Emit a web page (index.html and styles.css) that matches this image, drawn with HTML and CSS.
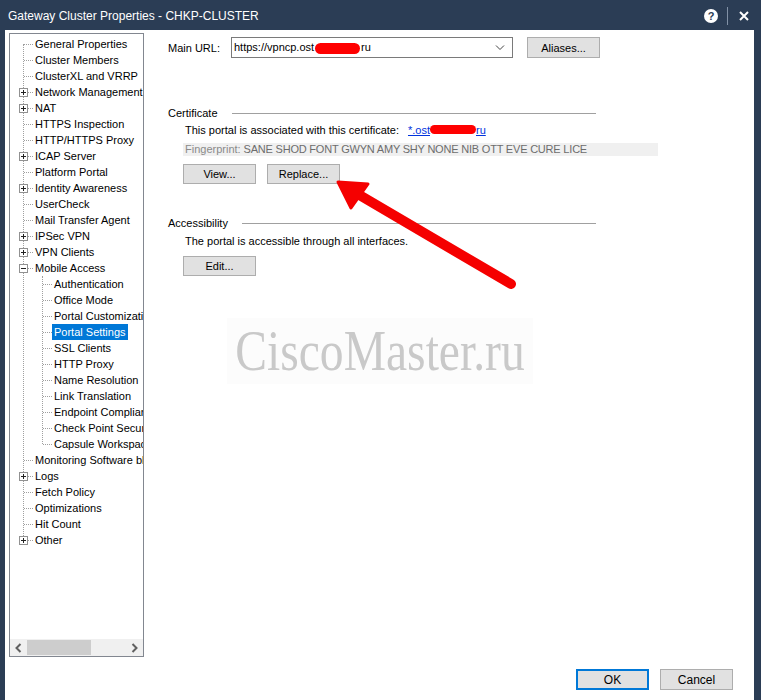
FILE: index.html
```html
<!DOCTYPE html>
<html lang="en">
<head>
    <meta charset="UTF-8">
    <meta name="viewport" content="width=device-width, initial-scale=1.0">
    <title>Gateway Cluster Properties - CHKP-CLUSTER</title>
    <link rel="stylesheet" href="styles.css">
</head>
<body>
    <div class="window">
        <div class="titlebar">
            <span class="title">Gateway Cluster Properties - CHKP-CLUSTER</span>
            <div class="tb-controls">
                <span class="help">?</span>
                <span class="tb-sep"></span>
                <svg class="tb-close" width="10" height="10" viewBox="0 0 10 10">
                    <path d="M1 1L9 9M9 1L1 9" stroke="#fff" stroke-width="2" />
                </svg>
            </div>
        </div>

        <div class="client">
            <div class="main-row">
                <div class="tree">
                    <div class="tree-scroll">
                        <ul class="tree-root">
                            <li><div class="row"><span class="label">General Properties</span></div></li>
                            <li><div class="row"><span class="label">Cluster Members</span></div></li>
                            <li><div class="row"><span class="label">ClusterXL and VRRP</span></div></li>
                            <li><div class="row"><span class="exp plus"></span><span class="label">Network Management</span></div></li>
                            <li><div class="row"><span class="exp plus"></span><span class="label">NAT</span></div></li>
                            <li><div class="row"><span class="label">HTTPS Inspection</span></div></li>
                            <li><div class="row"><span class="label">HTTP/HTTPS Proxy</span></div></li>
                            <li><div class="row"><span class="exp plus"></span><span class="label">ICAP Server</span></div></li>
                            <li><div class="row"><span class="label">Platform Portal</span></div></li>
                            <li><div class="row"><span class="exp plus"></span><span class="label">Identity Awareness</span></div></li>
                            <li><div class="row"><span class="label">UserCheck</span></div></li>
                            <li><div class="row"><span class="label">Mail Transfer Agent</span></div></li>
                            <li><div class="row"><span class="exp plus"></span><span class="label">IPSec VPN</span></div></li>
                            <li><div class="row"><span class="exp plus"></span><span class="label">VPN Clients</span></div></li>
                            <li>
                                <div class="row"><span class="exp"></span><span class="label">Mobile Access</span></div>
                                <ul class="tree-kids">
                                    <li><div class="row"><span class="label">Authentication</span></div></li>
                                    <li><div class="row"><span class="label">Office Mode</span></div></li>
                                    <li><div class="row"><span class="label">Portal Customization</span></div></li>
                                    <li><div class="row"><span class="label selected">Portal Settings</span></div></li>
                                    <li><div class="row"><span class="label">SSL Clients</span></div></li>
                                    <li><div class="row"><span class="label">HTTP Proxy</span></div></li>
                                    <li><div class="row"><span class="label">Name Resolution</span></div></li>
                                    <li><div class="row"><span class="label">Link Translation</span></div></li>
                                    <li><div class="row"><span class="label">Endpoint Compliance</span></div></li>
                                    <li><div class="row"><span class="label">Check Point Secure Workspace</span></div></li>
                                    <li><div class="row"><span class="label">Capsule Workspace</span></div></li>
                                </ul>
                            </li>
                            <li><div class="row"><span class="label">Monitoring Software blades</span></div></li>
                            <li><div class="row"><span class="exp plus"></span><span class="label">Logs</span></div></li>
                            <li><div class="row"><span class="label">Fetch Policy</span></div></li>
                            <li><div class="row"><span class="label">Optimizations</span></div></li>
                            <li><div class="row"><span class="label">Hit Count</span></div></li>
                            <li><div class="row"><span class="exp plus"></span><span class="label">Other</span></div></li>
                        </ul>
                    </div>
                    <div class="hscroll">
                        <svg class="hs-arrow" width="8" height="10" viewBox="0 0 8 10"><path d="M6 1L2 5L6 9" fill="none" stroke="#606060" stroke-width="2" /></svg>
                        <div class="hs-track"><div class="hs-thumb"></div></div>
                        <svg class="hs-arrow" width="8" height="10" viewBox="0 0 8 10"><path d="M2 1L6 5L2 9" fill="none" stroke="#606060" stroke-width="2" /></svg>
                    </div>
                </div>

                <div class="page">
                    <div class="url-row">
                        <span class="url-label">Main URL:</span>
                        <div class="combo">
                            <span class="combo-text">https://vpncp.ost<span class="blot url-blot"></span>ru</span>
                            <svg class="combo-chev" width="10" height="6" viewBox="0 0 10 6"><path d="M1 0.5L5 4.5L9 0.5" fill="none" stroke="#444" stroke-width="1" /></svg>
                        </div>
                        <button class="btn aliases">Aliases...</button>
                    </div>

                    <div class="group cert-group">
                        <div class="group-head"><span>Certificate</span><span class="group-line"></span></div>
                        <div class="group-body">
                            <div class="text-row">This portal is associated with this certificate:<a class="cert-link" href="#">*.ost<span class="blot link-blot"></span>ru</a></div>
                            <div class="fingerprint"><span class="fp-key">Fingerprint:</span> SANE SHOD FONT GWYN AMY SHY NONE NIB OTT EVE CURE LICE</div>
                            <div class="btn-row">
                                <button class="btn">View...</button>
                                <button class="btn">Replace...</button>
                            </div>
                        </div>
                    </div>

                    <div class="group access-group">
                        <div class="group-head"><span>Accessibility</span><span class="group-line"></span></div>
                        <div class="group-body">
                            <div class="text-row">The portal is accessible through all interfaces.</div>
                            <div class="btn-row">
                                <button class="btn">Edit...</button>
                            </div>
                        </div>
                    </div>
                </div>
            </div>

            <div class="footer">
                <button class="btn big default">OK</button>
                <button class="btn big">Cancel</button>
            </div>
        </div>

        <div class="watermark">CiscoMaster.ru</div>

        <svg class="arrow" width="761" height="700" viewBox="0 0 761 700">
            <line x1="511" y1="284" x2="356" y2="193" stroke="#f50000" stroke-width="10" stroke-linecap="round" />
            <polygon points="338,182 368,184 351,208" fill="#f50000" stroke="#f50000" stroke-width="3" stroke-linejoin="round" />
        </svg>
    </div>
</body>
</html>
```

FILE: styles.css
```css
body {
  margin: 0;
  font-family: "Liberation Sans", Arial, sans-serif;
  font-size: 11px;
  color: #000;
  background: #fff;
}

.window {
  position: relative;
  width: 761px;
  height: 700px;
  background: #2b3d55;
  display: flex;
  flex-direction: column;
  overflow: hidden;
}

/* title bar */
.titlebar {
  height: 30px;
  flex: none;
  display: flex;
  align-items: center;
  justify-content: space-between;
  padding: 1px 0 0 8px;
  box-sizing: border-box;
}

.title {
  color: #fff;
  font-size: 12px;
}

.tb-controls {
  display: flex;
  align-items: center;
  padding-right: 12px;
}

.help {
  width: 14px;
  height: 14px;
  border-radius: 50%;
  background: #fff;
  color: #2b3d55;
  font-weight: bold;
  font-size: 11px;
  line-height: 14px;
  text-align: center;
}

.tb-sep {
  width: 1px;
  height: 18px;
  background: #8191a6;
  margin: 0 11px 0 9px;
}

.tb-close {
  display: block;
}

/* client area */
.client {
  flex: 1;
  background: #fff;
  margin: 0 7px 0 5px;
  display: flex;
  flex-direction: column;
}

.main-row {
  display: flex;
}

/* tree */
.tree {
  width: 135px;
  height: 624px;
  margin: 3px 0 0 4px;
  box-sizing: border-box;
  border: 1px solid #828790;
  display: flex;
  flex-direction: column;
  flex: none;
}

.tree-scroll {
  flex: 1;
  overflow: hidden;
  padding-top: 2px;
}

.tree ul {
  list-style: none;
  margin: 0;
  padding: 0;
  position: relative;
}

.tree-root::before,
.tree-kids::before {
  content: "";
  position: absolute;
  border-left: 1px dotted #a0a0a0;
}

.tree-root::before { left: 13px; top: 8px; bottom: 8px; }
.tree-kids::before { left: 32px; top: 0; bottom: 8px; }

.row {
  position: relative;
  height: 16px;
  line-height: 16px;
  padding-left: 23px;
  white-space: nowrap;
}

.row::before {
  content: "";
  position: absolute;
  left: 14px;
  top: 8px;
  width: 9px;
  border-top: 1px dotted #a0a0a0;
}

.tree-kids .row { padding-left: 42px; }
.tree-kids .row::before { left: 33px; }

.label {
  display: inline-block;
  padding: 0 2px;
  height: 16px;
}

.label.selected {
  background: #0078d7;
  color: #fff;
}

.exp {
  position: absolute;
  left: 9px;
  top: 4px;
  width: 9px;
  height: 9px;
  box-sizing: border-box;
  border: 1px solid #919191;
  background: #fff;
  z-index: 1;
}

.exp::before,
.exp::after {
  content: "";
  position: absolute;
  background: #222;
}

.exp::before { left: 1px; top: 3px; width: 5px; height: 1px; }
.exp.plus::after { left: 3px; top: 1px; width: 1px; height: 5px; }

.hscroll {
  height: 17px;
  background: #f0f0f0;
  display: flex;
  align-items: center;
  flex: none;
}

.hs-arrow {
  width: 17px;
  flex: none;
}

.hs-track {
  flex: 1;
  height: 15px;
}

.hs-thumb {
  width: 64px;
  height: 15px;
  background: #cdcdcd;
}

/* right page */
.page {
  padding: 7px 0 0 24px;
  flex: 1;
}

.url-row {
  display: flex;
  align-items: center;
  height: 21px;
}

.url-label {
  width: 63px;
}

.combo {
  width: 282px;
  height: 21px;
  box-sizing: border-box;
  border: 1px solid #7a7a7a;
  display: flex;
  align-items: center;
  justify-content: space-between;
  padding: 0 7px 0 2px;
}

.blot {
  display: inline-block;
  background: #ff0000;
  border-radius: 6px;
  vertical-align: middle;
}

.url-blot {
  width: 45px;
  height: 11px;
  margin: 0 1px;
}

.link-blot {
  width: 46px;
  height: 9px;
  margin-top: -3px;
}

.btn {
  font-family: "Liberation Sans", Arial, sans-serif;
  font-size: 11px;
  color: #000;
  background: #e1e1e1;
  border: 1px solid #adadad;
  width: 73px;
  height: 20px;
  padding: 0;
}

.aliases {
  margin-left: 14px;
  height: 21px;
}

.group-head {
  width: 428px;
  height: 14px;
  display: flex;
  align-items: center;
}

.group-line {
  flex: 1;
  border-top: 1px solid #a0a0a0;
  margin-left: 14px;
}

.cert-group { margin-top: 48px; }
.access-group { margin-top: 32px; }

.group-body {
  padding-left: 17px;
}

.text-row {
  height: 14px;
  line-height: 14px;
  margin-top: 3px;
}

.access-group .text-row { margin-top: 4px; }

.cert-link {
  color: #0033dd;
  margin-left: 9px;
}

.fingerprint {
  margin: 6px 0 0 -2px;
  padding-left: 2px;
  width: 473px;
  height: 13px;
  line-height: 13px;
  background: #f0f0f0;
  color: #6d6d6d;
  white-space: nowrap;
  letter-spacing: -0.2px;
}

.fp-key {
  color: #8a8a8a;
  letter-spacing: 0;
}

.btn-row {
  display: flex;
  gap: 11px;
  margin: 8px 0 0 -2px;
}

/* footer */
.footer {
  display: flex;
  justify-content: flex-end;
  gap: 11px;
  margin-top: 12px;
  padding-right: 21px;
}

.btn.big {
  height: 21px;
  font-size: 12px;
}

.btn.default {
  border-color: #0078d7;
  box-shadow: inset 0 0 0 1px #0078d7;
}

/* overlays */
.watermark {
  position: absolute;
  left: 200px;
  top: 318px;
  width: 360px;
  height: 66px;
  background: #fcfcfc;
  color: #c9c9c9;
  font-family: "Liberation Serif", "Times New Roman", serif;
  font-size: 56px;
  line-height: 66px;
  text-align: center;
  white-space: nowrap;
  transform: scaleX(0.85);
}

.arrow {
  position: absolute;
  left: 0;
  top: 0;
  pointer-events: none;
}
```
